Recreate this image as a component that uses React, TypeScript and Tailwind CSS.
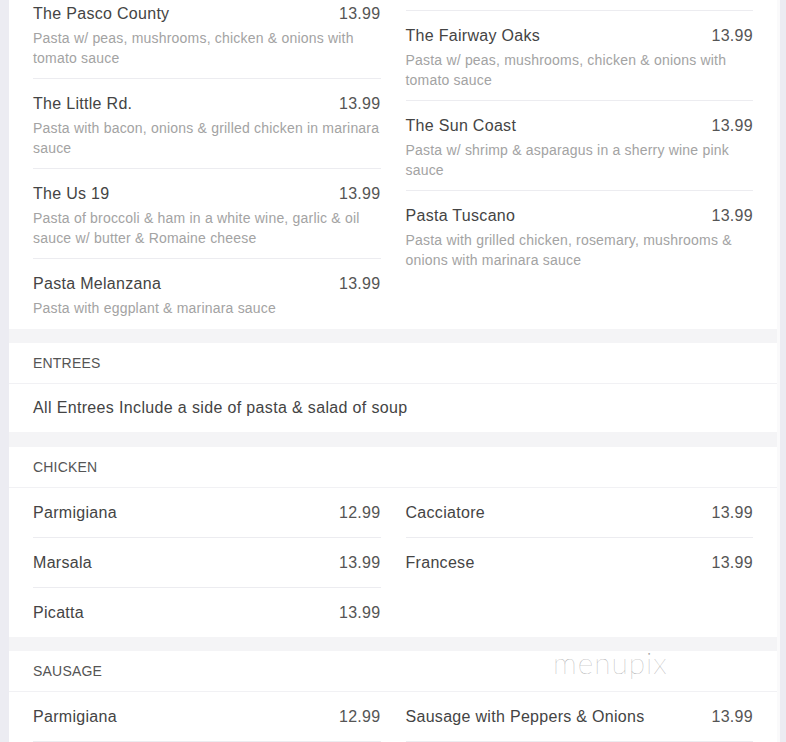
import React from "react";

type Dish = { name: string; price: string; desc?: string };

const pastaLeft: Dish[] = [
  { name: "The Pasco County", price: "13.99", desc: "Pasta w/ peas, mushrooms, chicken & onions with tomato sauce" },
  { name: "The Little Rd.", price: "13.99", desc: "Pasta with bacon, onions & grilled chicken in marinara sauce" },
  { name: "The Us 19", price: "13.99", desc: "Pasta of broccoli & ham in a white wine, garlic & oil sauce w/ butter & Romaine cheese" },
  { name: "Pasta Melanzana", price: "13.99", desc: "Pasta with eggplant & marinara sauce" },
];

const pastaRight: Dish[] = [
  { name: "The Fairway Oaks", price: "13.99", desc: "Pasta w/ peas, mushrooms, chicken & onions with tomato sauce" },
  { name: "The Sun Coast", price: "13.99", desc: "Pasta w/ shrimp & asparagus in a sherry wine pink sauce" },
  { name: "Pasta Tuscano", price: "13.99", desc: "Pasta with grilled chicken, rosemary, mushrooms & onions with marinara sauce" },
];

function PastaItem({ item, first }: { item: Dish; first?: boolean }) {
  return (
    <div className={`pb-[10px] ${first ? "pt-[4px]" : "pt-[15px] border-t border-[#ececf0]"}`}>
      <div className="flex justify-between text-[16px] leading-[20px] tracking-[0.3px]">
        <span className="text-[#444]">{item.name}</span>
        <span className="text-[#555]">{item.price}</span>
      </div>
      <p className="mt-[4px] text-[14px] leading-[20px] text-[#a3a3a3] tracking-[0.2px]">{item.desc}</p>
    </div>
  );
}

function Row({ item, last }: { item: Dish; last?: boolean }) {
  return (
    <div
      className={`flex justify-between py-[14px] text-[16px] leading-[21px] tracking-[0.3px] ${
        last ? "" : "border-b border-[#ececf0]"
      }`}
    >
      <span className="text-[#444]">{item.name}</span>
      <span className="text-[#555]">{item.price}</span>
    </div>
  );
}

function Header({ title }: { title: string }) {
  return (
    <div className="h-[41px] flex items-center pt-[1px] px-6 border-b border-[#f1f1f4] text-[14px] tracking-[0.2px] text-[#555]">
      {title}
    </div>
  );
}

export default function App() {
  return (
    <div
      className="relative w-[786px] h-[742px] overflow-hidden bg-[#ececf2] pl-[9px] flex"
      style={{ fontFamily: '"Liberation Sans", Arial, sans-serif' }}
    >
      <div className="w-[768px] flex flex-col bg-[#f4f4f6]">
        {/* Pasta (scrolled) */}
        <div className="bg-white grid grid-cols-2 gap-x-[25px] px-6 h-[329px]">
          <div>
            {pastaLeft.map((d, i) => (
              <PastaItem key={d.name} item={d} first={i === 0} />
            ))}
          </div>
          <div className="pt-[10px]">
            {pastaRight.map((d) => (
              <PastaItem key={d.name} item={d} />
            ))}
          </div>
        </div>

        {/* Entrees */}
        <div className="bg-white mt-[14px]">
          <Header title="ENTREES" />
          <div className="px-6 py-[14px] text-[16px] leading-[20px] tracking-[0.35px] text-[#444]">
            All Entrees Include a side of pasta &amp; salad of soup
          </div>
        </div>

        {/* Chicken */}
        <div className="bg-white mt-[15px]">
          <Header title="CHICKEN" />
          <div className="grid grid-cols-2 gap-x-[25px] px-6">
            <div>
              <Row item={{ name: "Parmigiana", price: "12.99" }} />
              <Row item={{ name: "Marsala", price: "13.99" }} />
              <Row item={{ name: "Picatta", price: "13.99" }} last />
            </div>
            <div>
              <Row item={{ name: "Cacciatore", price: "13.99" }} />
              <Row item={{ name: "Francese", price: "13.99" }} last />
            </div>
          </div>
        </div>

        {/* Sausage */}
        <div className="bg-white mt-[14px]">
          <Header title="SAUSAGE" />
          <div className="grid grid-cols-2 gap-x-[25px] px-6">
            <div>
              <Row item={{ name: "Parmigiana", price: "12.99" }} />
            </div>
            <div>
              <Row item={{ name: "Sausage with Peppers & Onions", price: "13.99" }} />
            </div>
          </div>
        </div>
      </div>
      <div className="w-[3px] bg-[#fafafb]" />

      {/* watermark */}
      <div
        className="absolute left-[553px] top-[640px] text-[30px] font-thin text-[#a0a0a0] tracking-[1px]"
        style={{ fontFamily: "Lato, sans-serif" }}
      >
        menupix
      </div>
    </div>
  );
}
